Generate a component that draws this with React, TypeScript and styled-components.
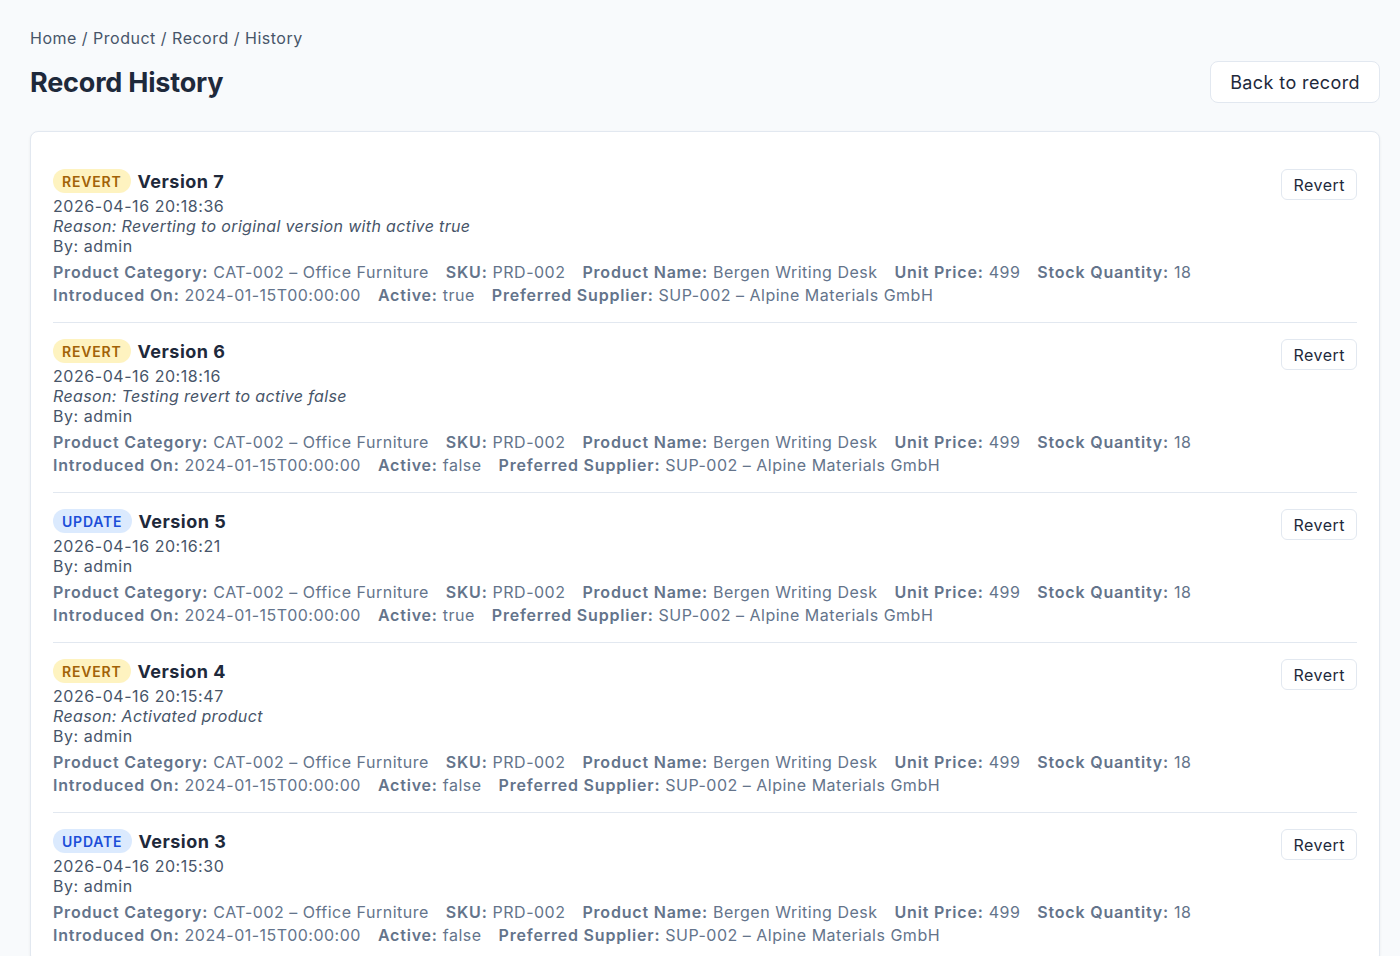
import React from "react";
import styled, { createGlobalStyle } from "styled-components";

const Global = createGlobalStyle`
  html, body { margin: 0; padding: 0; background: #f8fafc; }
  body { font-family: Inter, "Noto Sans", sans-serif; color: #0f172a; -webkit-font-smoothing: antialiased; }
  * { box-sizing: border-box; }
`;

const Page = styled.div`
  padding: 26px 20px 40px 30px;
`;

const Breadcrumb = styled.nav`
  font-size: 16px;
  line-height: 24px;
  color: #475569;
  letter-spacing: 0.5px;
`;

const HeaderRow = styled.div`
  display: flex;
  align-items: center;
  justify-content: space-between;
  margin-top: 11px;
`;

const Title = styled.h1`
  margin: 0;
  font-size: 27px;
  font-weight: 700;
  color: #1e293b;
  letter-spacing: -0.2px;
`;

const BackButton = styled.button`
  font-family: inherit;
  font-size: 18px;
  letter-spacing: 0.4px;
  color: #1e293b;
  background: #fff;
  border: 1px solid #e2e8f0;
  border-radius: 8px;
  height: 42px;
  padding: 0 19px;
  cursor: pointer;
`;

const Card = styled.div`
  margin-top: 28px;
  background: #fff;
  border: 1px solid #e2e8f0;
  border-radius: 8px;
  box-shadow: 0 1px 3px rgba(15, 23, 42, 0.06);
  padding: 21px 22px 0 22px;
`;

const Entry = styled.div`
  display: flex;
  justify-content: space-between;
  align-items: flex-start;
  padding: 16px 0 15px;
  & + & { border-top: 1px solid #e2e8f0; }
`;

const EntryBody = styled.div`
  display: flex;
  flex-direction: column;
`;

const TitleLine = styled.div`
  display: flex;
  align-items: center;
  gap: 6px;
  margin-bottom: 3px;
`;

const Badge = styled.span<{ $kind: "revert" | "update" }>`
  display: inline-flex;
  align-items: center;
  height: 24px;
  padding: 0 10px 0 9px;
  border-radius: 999px;
  font-size: 14px;
  font-weight: 600;
  letter-spacing: 0.8px;
  background: ${(p) => (p.$kind === "revert" ? "#fef3c0" : "#dbeafe")};
  color: ${(p) => (p.$kind === "revert" ? "#a16207" : "#1d4ed8")};
`;

const VersionTitle = styled.span`
  font-size: 18px;
  font-weight: 700;
  letter-spacing: 0.5px;
  color: #1e293b;
`;

const Meta = styled.div<{ $italic?: boolean }>`
  font-size: 16px;
  line-height: 20px;
  color: #475569;
  font-style: ${(p) => (p.$italic ? "italic" : "normal")};
  letter-spacing: ${(p) => (p.$italic ? "0.35px" : "0.55px")};
`;

const Fields = styled.div`
  display: flex;
  flex-wrap: wrap;
  column-gap: 17px;
  margin-top: 5px;
  font-size: 16px;
  line-height: 23px;
  color: #64748b;
  letter-spacing: 0.5px;
`;

const Label = styled.b`
  font-weight: 600;
  letter-spacing: 0.8px;
`;

const RevertButton = styled.button`
  font-family: inherit;
  font-size: 16px;
  letter-spacing: 0.5px;
  color: #1e293b;
  background: #fff;
  border: 1px solid #e2e8f0;
  border-radius: 6px;
  height: 31px;
  padding: 0 11px;
  cursor: pointer;
`;

type Version = {
  kind: "revert" | "update";
  n: number;
  date: string;
  reason?: string;
  active: boolean;
};

const versions: Version[] = [
  { kind: "revert", n: 7, date: "2026-04-16 20:18:36", reason: "Reverting to original version with active true", active: true },
  { kind: "revert", n: 6, date: "2026-04-16 20:18:16", reason: "Testing revert to active false", active: false },
  { kind: "update", n: 5, date: "2026-04-16 20:16:21", active: true },
  { kind: "revert", n: 4, date: "2026-04-16 20:15:47", reason: "Activated product", active: false },
  { kind: "update", n: 3, date: "2026-04-16 20:15:30", active: false },
];

export default function App() {
  return (
    <>
      <Global />
      <Page>
        <Breadcrumb>Home / Product / Record / History</Breadcrumb>
        <HeaderRow>
          <Title>Record History</Title>
          <BackButton>Back to record</BackButton>
        </HeaderRow>
        <Card>
          {versions.map((v) => {
            const fields: [string, string][] = [
              ["Product Category", "CAT-002 – Office Furniture"],
              ["SKU", "PRD-002"],
              ["Product Name", "Bergen Writing Desk"],
              ["Unit Price", "499"],
              ["Stock Quantity", "18"],
              ["Introduced On", "2024-01-15T00:00:00"],
              ["Active", v.active ? "true" : "false"],
              ["Preferred Supplier", "SUP-002 – Alpine Materials GmbH"],
            ];
            return (
              <Entry key={v.n}>
                <EntryBody>
                  <TitleLine>
                    <Badge $kind={v.kind}>{v.kind.toUpperCase()}</Badge>
                    <VersionTitle>Version {v.n}</VersionTitle>
                  </TitleLine>
                  <Meta>{v.date}</Meta>
                  {v.reason && <Meta $italic>Reason: {v.reason}</Meta>}
                  <Meta>By: admin</Meta>
                  <Fields>
                    {fields.map(([k, val]) => (
                      <span key={k}>
                        <Label>{k}:</Label> {val}
                      </span>
                    ))}
                  </Fields>
                </EntryBody>
                <RevertButton>Revert</RevertButton>
              </Entry>
            );
          })}
        </Card>
      </Page>
    </>
  );
}
